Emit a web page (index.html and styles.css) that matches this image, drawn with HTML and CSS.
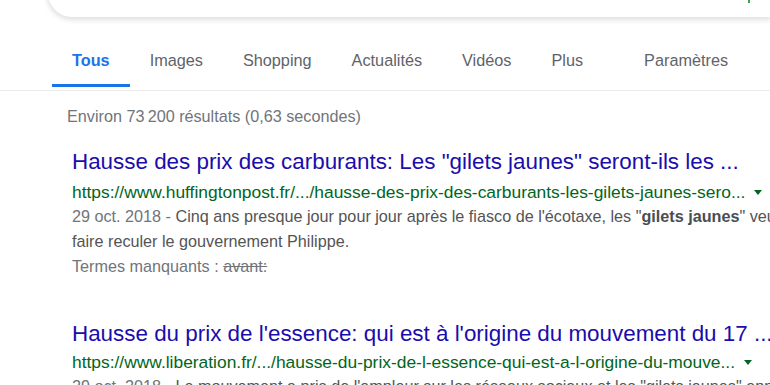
FILE: index.html
```html
<!DOCTYPE html>
<html lang="fr">
<head>
<meta charset="utf-8">
<title>Recherche</title>
<link rel="stylesheet" href="styles.css">
</head>
<body>
<div class="top">
  <div class="searchbox"><span class="mic"></span></div>
</div>
<nav class="tabs">
  <a class="tab active">Tous</a>
  <a class="tab">Images</a>
  <a class="tab">Shopping</a>
  <a class="tab">Actualités</a>
  <a class="tab">Vidéos</a>
  <a class="tab">Plus</a>
  <a class="tab settings">Paramètres</a>
</nav>
<main class="results">
  <div class="stats">Environ 73&#8239;200 résultats (0,63 secondes)</div>
  <div class="result">
    <a class="title">Hausse des prix des carburants: Les "gilets jaunes" seront-ils les ...</a>
    <div class="url">https://www.huffingtonpost.fr/.../hausse-des-prix-des-carburants-les-gilets-jaunes-sero...<span class="arrow"></span></div>
    <div class="snippet"><span class="date">29 oct. 2018 - </span>Cinq ans presque jour pour jour après le fiasco de l'écotaxe, les "<b>gilets jaunes</b>" veulent<br>faire reculer le gouvernement Philippe.</div>
    <div class="missing">Termes manquants : <s>avant:</s></div>
  </div>
  <div class="result second">
    <a class="title">Hausse du prix de l'essence: qui est à l'origine du mouvement du 17 ...</a>
    <div class="url">https://www.liberation.fr/.../hausse-du-prix-de-l-essence-qui-est-a-l-origine-du-mouve...<span class="arrow"></span></div>
    <div class="snippet"><span class="date">29 oct. 2018 - </span>Le mouvement a pris de l'ampleur sur les réseaux sociaux et les "gilets jaunes" appellent</div>
  </div>
</main>
</body>
</html>
```
FILE: styles.css
```css
html, body {
  margin: 0;
  padding: 0;
  background: #fff;
  width: 770px;
  height: 385px;
  overflow: hidden;
  font-family: "Liberation Sans", Arial, sans-serif;
}
.top {
  display: flex;
  align-items: flex-end;
  height: 17px;
  padding-left: 48px;
}
.searchbox {
  position: relative;
  flex: 1 0 auto;
  height: 46px;
  border-radius: 0 0 0 24px;
  background: #fff;
  box-shadow: 0 2px 5px 1px rgba(64, 60, 67, .16);
}
.mic {
  position: absolute;
  right: 20px;
  bottom: 14px;
  width: 2px;
  height: 4px;
  background: #34a853;
}
.tabs {
  display: flex;
  align-items: flex-end;
  height: 70px;
  padding: 0 0 3px 52px;
  border-bottom: 1px solid #ebebeb;
}
.tab {
  display: block;
  font-size: 16.25px;
  color: #5f6368;
  padding: 0 20px 14px;
  border-bottom: 3px solid transparent;
  line-height: 20px;
}
.tab.active {
  color: #1a73e8;
  font-weight: bold;
  border-bottom-color: #1a73e8;
}
.tab.settings {
  margin-left: 21px;
}
.results {
  padding-left: 72px;
}
.stats {
  margin-left: -5px;
  padding-top: 15px;
  font-size: 16.2px;
  line-height: 20px;
  color: #70757a;
}
.result {
  white-space: nowrap;
  margin-top: 22px;
}
.result.second {
  margin-top: 41px;
}
.title {
  display: block;
  font-size: 22.4px;
  line-height: 28px;
  color: #1a0dab;
}
.url {
  display: flex;
  align-items: center;
  margin-top: 4px;
  font-size: 17.4px;
  line-height: 24px;
  color: #006621;
}
.second .url {
  margin-top: 2px;
}
.arrow {
  width: 0;
  height: 0;
  margin-left: 9px;
  border-left: 4px solid transparent;
  border-right: 4px solid transparent;
  border-top: 5px solid #006621;
}
.snippet, .missing {
  font-size: 16.2px;
  line-height: 25px;
  color: #545454;
}
.date, .missing {
  color: #70757a;
}
.snippet b {
  color: #4a4d51;
}
```
